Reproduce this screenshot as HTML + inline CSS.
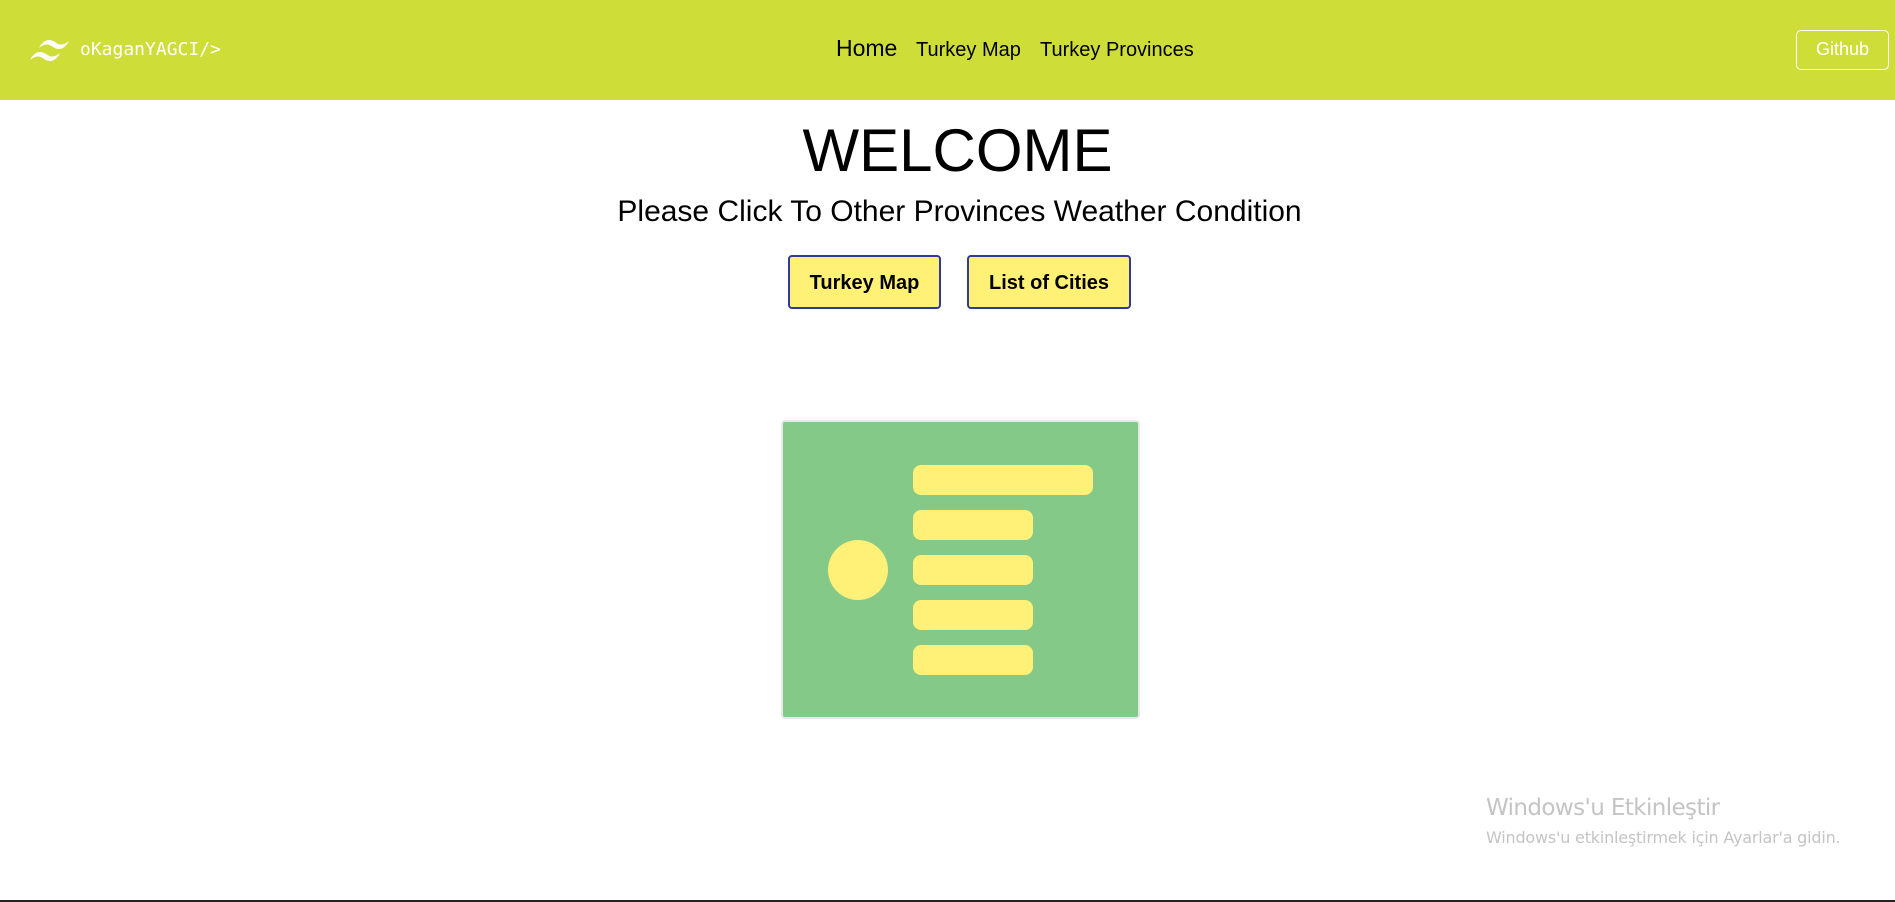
<!DOCTYPE html>
<html><head><meta charset="utf-8"><style>
*{margin:0;padding:0;box-sizing:border-box}
body{width:1895px;height:902px;background:#fff;position:relative;overflow:hidden;font-family:"Liberation Sans",Arial,sans-serif;color:#000}
.hdr{position:absolute;left:0;top:0;width:1895px;height:100px;background:#cfdd38}
.abs{position:absolute;white-space:nowrap}
.btn{position:absolute;background:#fff176;border:2px solid #2f3b97;border-radius:4px;font-weight:bold;font-size:20px;display:flex;align-items:center;justify-content:center;padding-top:3px}
.bar{position:absolute;background:#fff078;border-radius:8px}
</style></head><body>
<div class="hdr"></div>
<svg class="abs" style="left:29px;top:38px" width="42" height="26" viewBox="0 0 42 26">
<path d="M10 10 C14 2 20 0 26 4 C30 7 34 8 40 3 C36 11 30 13 24 9 C20 6 16 5 10 10Z" fill="#fff"/>
<path d="M1 22 C5 14 11 12 17 16 C21 19 25 20 31 15 C27 23 21 25 15 21 C11 18 7 17 1 22Z" fill="#fff"/>
</svg>
<div class="abs" style="left:80px;top:39px;font-family:'DejaVu Sans Mono','Liberation Mono',monospace;font-size:18px;color:#fff">oKaganYAGCI/&gt;</div>
<div class="abs" style="left:836px;top:35px;font-size:23px">Home</div>
<div class="abs" style="left:916px;top:39px;font-size:20px">Turkey Map</div>
<div class="abs" style="left:1040px;top:39px;font-size:20px">Turkey Provinces</div>
<div class="abs" style="left:1796px;top:30px;width:93px;height:40px;border:1px solid #fff;border-radius:5px;color:#fff;font-size:18px;display:flex;align-items:center;justify-content:center;padding-bottom:2px">Github</div>
<div class="abs" style="left:0;width:1895px;top:116px;text-align:center;font-size:60px;line-height:70px;padding-left:20px">WELCOME</div>
<div class="abs" style="left:0;width:1895px;top:194px;text-align:center;font-size:30px;line-height:36px;padding-left:24px">Please Click To Other Provinces Weather Condition</div>
<div class="btn" style="left:788px;top:255px;width:153px;height:54px">Turkey Map</div>
<div class="btn" style="left:967px;top:255px;width:164px;height:54px">List of Cities</div>
<div class="abs" style="left:781px;top:420px;width:359px;height:299px;border:2px solid #e8e8e8;border-radius:4px;background:#85c988"></div>
<div class="bar" style="left:913px;top:465px;width:180px;height:30px"></div>
<div class="bar" style="left:913px;top:510px;width:120px;height:30px"></div>
<div class="bar" style="left:913px;top:555px;width:120px;height:30px"></div>
<div class="bar" style="left:913px;top:600px;width:120px;height:30px"></div>
<div class="bar" style="left:913px;top:645px;width:120px;height:30px"></div>
<div class="abs" style="left:828px;top:540px;width:60px;height:60px;border-radius:50%;background:#fff078"></div>
<div class="abs" style="left:1486px;top:795px;font-size:23px;color:#c4c4c4;font-family:'DejaVu Sans',sans-serif;letter-spacing:-0.6px">Windows'u Etkinleştir</div>
<div class="abs" style="left:1486px;top:828px;font-size:16px;color:#c4c4c4;font-family:'DejaVu Sans',sans-serif;letter-spacing:-0.2px">Windows'u etkinleştirmek için Ayarlar'a gidin.</div>
<div class="abs" style="left:0;top:900px;width:1895px;height:2px;background:#222"></div>
</body></html>
